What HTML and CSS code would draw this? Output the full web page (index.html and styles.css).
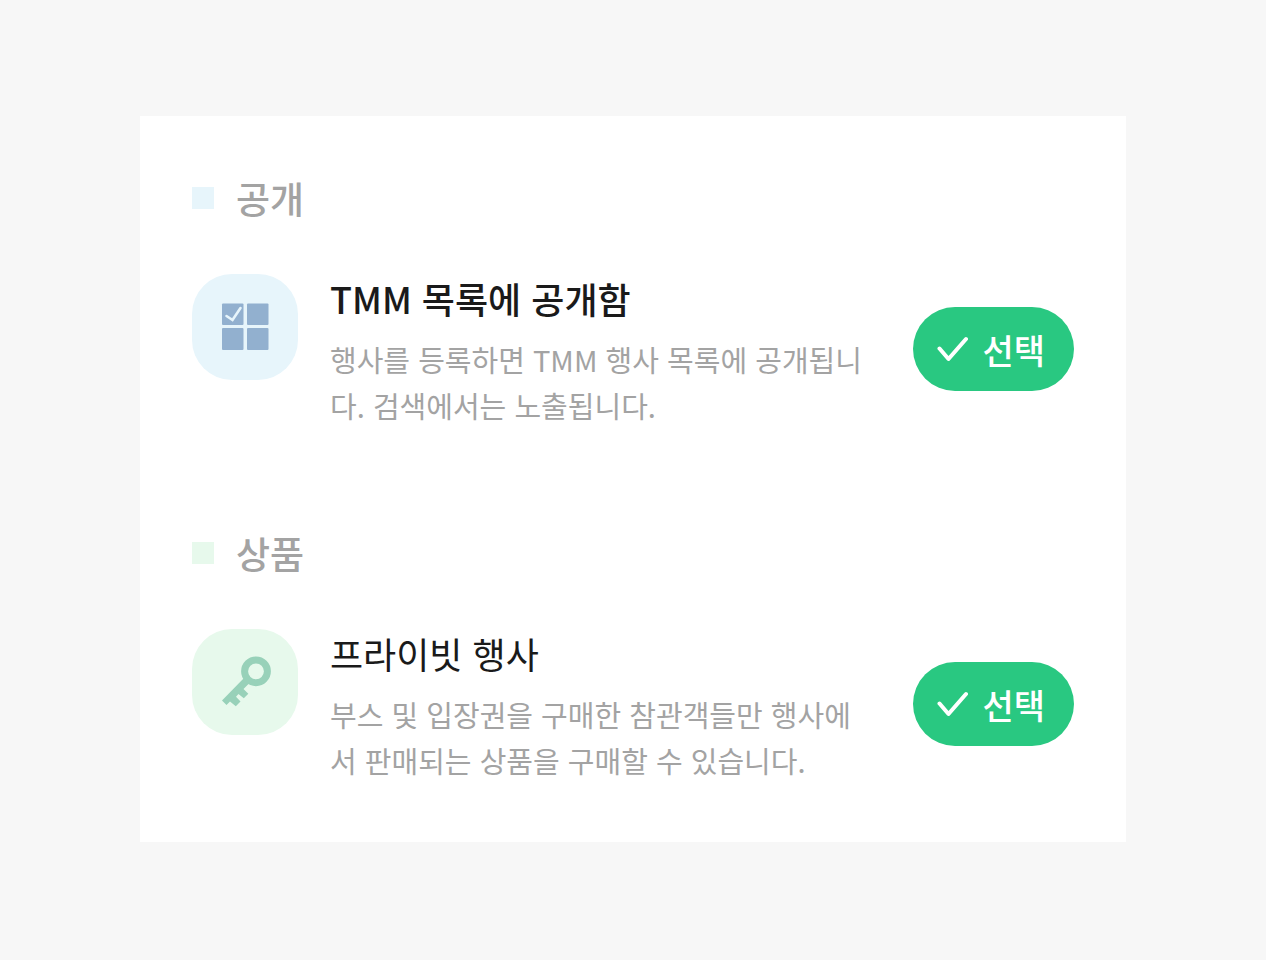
FILE: index.html
```
<!DOCTYPE html>
<html lang="ko">
<head>
  <meta charset="UTF-8" />
  <meta name="viewport" content="width=device-width, initial-scale=1.0"/>
  <title>TMM</title>
  <link rel="stylesheet" href="styles.css">
</head>
<body>
  <main class="card">
    <section class="group public">
      <h2 class="group-title"><span class="marker"></span>공개</h2>
      <div class="option">
        <div class="option-icon">
          <svg width="106" height="106" viewBox="0 0 106 106" aria-hidden="true">
            <g fill="#92b0cf">
              <rect x="30" y="29.5" width="21.5" height="21.5" rx="1"/>
              <rect x="55" y="29.5" width="21.5" height="21.5" rx="1"/>
              <rect x="30" y="54" width="21.5" height="22" rx="1"/>
              <rect x="55" y="54" width="21.5" height="22" rx="1"/>
            </g>
            <path d="M34.5 42L40.5 46L48.5 34" fill="none" stroke="#e7f5fb" stroke-width="2.6" stroke-linecap="round"/>
          </svg>
        </div>
        <div class="option-text">
          <h3 class="option-title strong">TMM 목록에 공개함</h3>
          <p>행사를 등록하면 TMM 행사 목록에 공개됩니다. 검색에서는 노출됩니다.</p>
        </div>
        <button type="button" class="select-btn">
          <svg width="32" height="26" viewBox="0 0 32 26" aria-hidden="true">
            <path d="M2.5 12.5L11.5 23L29 3" fill="none" stroke="#fff" stroke-width="4" stroke-linecap="round" stroke-linejoin="round"/>
          </svg>
          선택
        </button>
      </div>
    </section>

    <section class="group product">
      <h2 class="group-title"><span class="marker"></span>상품</h2>
      <div class="option">
        <div class="option-icon">
          <svg width="106" height="106" viewBox="0 0 106 106" aria-hidden="true">
            <circle cx="64" cy="42.3" r="11.4" fill="none" stroke="#98d1b9" stroke-width="7"/>
            <path d="M51.5 49.5L30 71.5L34.5 76L38 72.5L43.8 77.2L48.5 72.5L44 67.8L46.5 65L51.8 69.2L56.3 64.7L51.5 60L57 54.5Z" fill="#98d1b9"/>
          </svg>
        </div>
        <div class="option-text">
          <h3 class="option-title">프라이빗 행사</h3>
          <p>부스 및 입장권을 구매한 참관객들만 행사에서 판매되는 상품을 구매할 수 있습니다.</p>
        </div>
        <button type="button" class="select-btn">
          <svg width="32" height="26" viewBox="0 0 32 26" aria-hidden="true">
            <path d="M2.5 12.5L11.5 23L29 3" fill="none" stroke="#fff" stroke-width="4" stroke-linecap="round" stroke-linejoin="round"/>
          </svg>
          선택
        </button>
      </div>
    </section>
  </main>
</body>
</html>
```
FILE: styles.css
```
* {
  margin: 0;
  padding: 0;
  box-sizing: border-box;
}

body {
  background: #f7f7f7;
  min-height: 100vh;
  padding: 116px 140px;
  font-family: "Noto Sans CJK KR", sans-serif;
  color: #1a1a1a;
}

.card {
  background: #fff;
  display: flex;
  flex-direction: column;
  gap: 100px;
  padding: 57px 52px 59px;
}

/* section heading */
.group-title {
  display: flex;
  align-items: center;
  gap: 22px;
  margin-bottom: 51px;
  font-size: 37px;
  line-height: 50px;
  font-weight: 500;
  color: #a3a3a3;
}

.marker {
  width: 22px;
  height: 22px;
}

.public .marker,
.public .option-icon {
  background: #e7f5fb;
}

.product .marker,
.product .option-icon {
  background: #e7f9ec;
}

/* option row */
.option {
  display: flex;
  align-items: flex-start;
}

.option-icon {
  flex: none;
  width: 106px;
  height: 106px;
  border-radius: 40px;
  overflow: hidden;
}

.option-icon svg {
  display: block;
}

.option-text {
  flex: 1;
  margin: 0 48px 0 32px;
}

.option-title {
  margin-bottom: 14px;
  font-size: 36px;
  line-height: 48px;
  font-weight: 400;
}

.option-title.strong {
  font-weight: 500;
}

.option-text p {
  font-size: 29px;
  line-height: 46px;
  color: #a3a3a3;
}

.select-btn {
  flex: none;
  display: flex;
  align-items: center;
  gap: 13px;
  height: 84px;
  margin-top: 33px;
  padding: 0 29px 0 24px;
  border: none;
  border-radius: 42px;
  background: #29c881;
  color: #fff;
  font-family: inherit;
  font-size: 34px;
  font-weight: 500;
  cursor: pointer;
}
```
